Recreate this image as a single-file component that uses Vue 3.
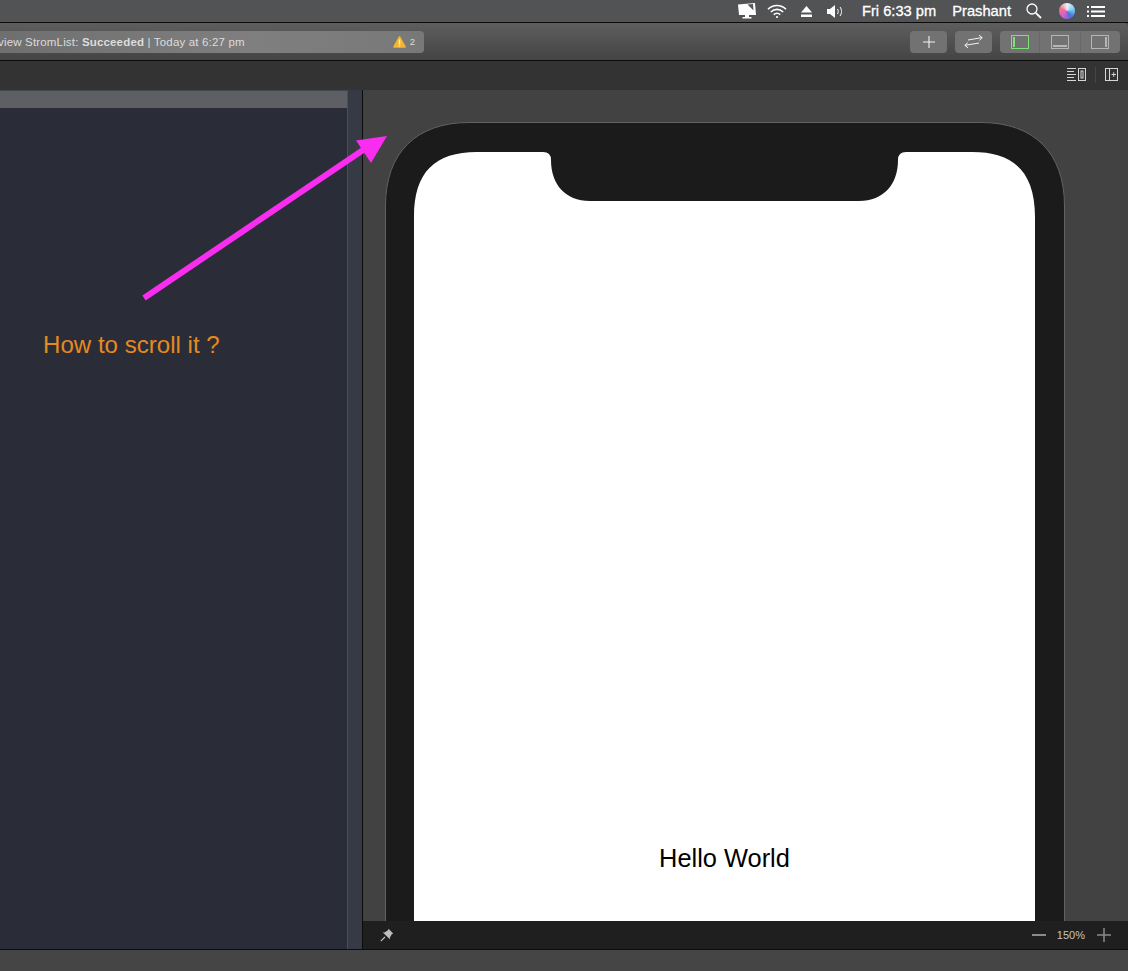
<template>
  <div class="screen-root">
    <div class="menubar">
      <svg class="mi" style="margin-right:11px" width="18" height="16" viewBox="0 0 18 16">
        <path d="M0 1.500L17 0 18 12H11v2h2.500v1.500h-9V14H7v-2H1z" fill="#fff" />
        <path d="M9.500 1.500L15.500 7.500 15 1z" fill="#55575a" />
      </svg>
      <svg class="mi" style="margin-right:14px" width="20" height="15" viewBox="0 0 20 15" fill="none" stroke="#fff" stroke-width="1.600">
        <path d="M1 5.200C6 .2 14 .2 19 5.200" />
        <path d="M3.800 8C7.500 4.500 12.500 4.500 16.200 8" />
        <path d="M6.700 10.700C8.600 9 11.400 9 13.300 10.700" />
        <circle cx="10" cy="13" r="1.100" fill="#fff" stroke="none" />
      </svg>
      <svg class="mi" style="margin-right:15px" width="11" height="11" viewBox="0 0 11 11" fill="#fff">
        <path d="M5.500 0L11 6.500H0z" />
        <rect y="8.500" width="11" height="2.500" />
      </svg>
      <svg class="mi" style="margin-right:19px" width="16" height="13" viewBox="0 0 16 13" fill="none">
        <path d="M0 4h3l5-4v13l-5-4H0z" fill="#fff" />
        <path d="M10.500 4C11.500 5.500 11.500 7.500 10.500 9M13 2C15 4.500 15 8.500 13 11" stroke="#fff" stroke-width="1" />
      </svg>
      <span class="menu-text">Fri 6:33 pm</span>
      <span class="menu-text user">Prashant</span>
      <svg class="mi" style="margin-right:17px" width="16" height="16" viewBox="0 0 16 16" fill="none" stroke="#fff">
        <circle cx="6" cy="6" r="5" stroke-width="1.300" />
        <path d="M9.800 9.800L15 15" stroke-width="1.800" />
      </svg>
      <span class="siri"></span>
      <svg class="mi" width="18" height="11" viewBox="0 0 18 11" fill="#fff">
        <rect width="2" height="2" /><rect x="4" width="14" height="2" />
        <rect y="4.500" width="2" height="2" /><rect x="4" y="4.500" width="14" height="2" />
        <rect y="9" width="2" height="2" /><rect x="4" y="9" width="14" height="2" />
      </svg>
    </div>

    <div class="toolbar">
      <div class="status">
        <span class="status-text">view StromList: <b>Succeeded</b> | Today at 6:27 pm</span>
        <span class="warn">
          <svg width="13" height="12" viewBox="0 0 13 12">
            <path d="M6.500 1L12 11H1z" fill="#f5b62e" stroke="#f5b62e" stroke-width="1.600" stroke-linejoin="round" />
            <rect x="5.800" y="3.500" width="1.400" height="5" fill="#fff3c8" />
            <rect x="5.800" y="9.300" width="1.400" height="1.400" fill="#fff3c8" />
          </svg>
          <span>2</span>
        </span>
      </div>
      <div class="tool-btns">
        <div class="tbtn">
          <svg width="12" height="12" viewBox="0 0 12 12" stroke="#f2f2f2" stroke-width="1.100">
            <path d="M6 0v12M0 6h12" />
          </svg>
        </div>
        <div class="tbtn">
          <svg width="19" height="13" viewBox="0 0 19 13" fill="none" stroke="#f2f2f2" stroke-width="1">
            <path d="M4 5L18 2.600M15 .2L18.200 2.600 15.500 5.400" />
            <path d="M1 10.300L15 8M3.800 7.600L.8 10.300 4 12.800" />
          </svg>
        </div>
        <div class="segmented">
          <div class="seg">
            <svg width="18" height="14" viewBox="0 0 18 14" fill="none">
              <rect x=".5" y=".5" width="17" height="13" stroke="#7fe07a" />
              <rect x="2" y="2" width="2" height="10" fill="#7fe07a" />
            </svg>
          </div>
          <div class="seg">
            <svg width="18" height="14" viewBox="0 0 18 14" fill="none">
              <rect x=".5" y=".5" width="17" height="13" stroke="#b5b5b5" />
              <rect x="2" y="10" width="14" height="2" fill="#b5b5b5" />
            </svg>
          </div>
          <div class="seg">
            <svg width="18" height="14" viewBox="0 0 18 14" fill="none">
              <rect x=".5" y=".5" width="17" height="13" stroke="#b5b5b5" />
              <rect x="14" y="2" width="2" height="10" fill="#b5b5b5" />
            </svg>
          </div>
        </div>
      </div>
    </div>

    <div class="tabbar">
      <svg width="19" height="13" viewBox="0 0 19 13" fill="none" stroke="#d6d6d6">
        <path d="M0 .5h9M0 3.500h7M0 6.500h9M0 9.500h7M0 12.500h9" />
        <rect x="11.500" y=".5" width="7" height="12" />
        <rect x="14" y="3" width="2" height="7" />
      </svg>
      <span class="tab-div"></span>
      <svg width="13" height="13" viewBox="0 0 13 13" fill="none" stroke="#d6d6d6">
        <rect x=".5" y=".5" width="12" height="12" />
        <path d="M4.500 0v13M6.500 6.500h4.500M8.700 4.300v4.500" />
      </svg>
    </div>

    <div class="main">
      <div class="left-pane">
        <div class="left-header"></div>
        <div class="left-body"></div>
      </div>
      <div class="gutter"></div>
      <div class="preview">
        <div class="canvas">
          <div class="phone">
            <!-- device frame and display with the notch -->
            <svg class="phone-shape" width="680" height="1000" viewBox="0 0 680 1000">
              <path d="M.5 1000V84C.5 31 31 .5 84 .5H596C649 .5 679.500 31 679.500 84V1000Z" fill="#1b1b1b" stroke="#626262" />
              <path d="M29 1000V95C29 50 50 30 92 30H158Q166 30 166 38C166 62 180 79 205 79H474C499 79 513 62 513 38Q513 30 521 30H587C629 30 650 50 650 95V1000Z" fill="#fff" />
            </svg>
            <div class="hello">Hello World</div>
          </div>
        </div>
        <div class="canvas-bar">
          <svg width="14" height="14" viewBox="0 0 14 14">
            <path d="M8.500 .8L13.200 5.500 11.800 6.200 9.800 9.800 10 11.500 2.700 4.200 4.400 4.400 8 2.300z" fill="#bdbdbd" />
            <path d="M5 9L.8 13.200" stroke="#bdbdbd" stroke-width="1.200" />
          </svg>
          <div class="zoom-ctrl">
            <span class="zoom-minus"></span>
            <span class="zoom-val">150%</span>
            <svg width="14" height="14" viewBox="0 0 14 14" stroke="#8a8a8a" stroke-width="1.500">
              <path d="M7 0v14M0 7h14" />
            </svg>
          </div>
        </div>
      </div>
    </div>

    <div class="bottombar"></div>

    <svg class="arrow" width="400" height="180" viewBox="0 0 400 180">
      <path d="M144 176L372 22" stroke="#f92df0" stroke-width="6" />
      <path d="M387 14L356 18.500 371 41z" fill="#f92df0" />
    </svg>
    <div class="note">How to scroll it ?</div>
  </div>
</template>

<script setup>
</script>

<style>
html,
body {
  margin: 0;
  background: #454545;
}
</style>

<style scoped>
.screen-root {
  position: relative;
  width: 1128px;
  height: 971px;
  overflow: hidden;
  display: flex;
  flex-direction: column;
  font-family: "Liberation Sans", Arial, sans-serif;
  background: #454545;
}

.menubar {
  height: 22px;
  flex-shrink: 0;
  display: flex;
  align-items: center;
  justify-content: flex-end;
  padding-right: 23px;
  background: #515355;
  border-bottom: 1px solid #0c0c0c;
}

.mi {
  flex-shrink: 0;
}

.menu-text {
  font-size: 14.700px;
  color: #fff;
  margin-right: 16px;
  white-space: nowrap;
  -webkit-text-stroke: 0.3px #fff;
}

.menu-text.user {
  margin-right: 15px;
}

.siri {
  width: 16px;
  height: 16px;
  margin-right: 12px;
  border-radius: 50%;
  background: conic-gradient(#f0f0f8, #7bd0f0, #4a6fe0, #d060d0, #f07090, #f0f0f8);
}

.toolbar {
  height: 37px;
  flex-shrink: 0;
  display: flex;
  align-items: center;
  justify-content: space-between;
  padding: 0 8px 0 0;
  background: linear-gradient(#5e5e5e, #444);
  border-bottom: 1px solid #0c0c0c;
  border-top-right-radius: 4px;
}

.status {
  width: 424px;
  height: 22px;
  box-sizing: border-box;
  display: flex;
  align-items: center;
  justify-content: space-between;
  padding-right: 9px;
  border-radius: 0 4px 4px 0;
  background: linear-gradient(90deg, #6f6f6f, #7f7f7f 60%, #787878);
  color: #dcdcdc;
  font-size: 11.500px;
  overflow: hidden;
}

.status-text {
  margin-left: -2px;
  letter-spacing: 0.17px;
  white-space: nowrap;
}

.warn {
  display: flex;
  align-items: center;
  gap: 4px;
  font-size: 9.500px;
}

.tool-btns {
  display: flex;
  gap: 8px;
}

.tbtn {
  width: 37px;
  height: 22px;
  display: flex;
  align-items: center;
  justify-content: center;
  border-radius: 4px;
  background: #727272;
}

.segmented {
  display: flex;
  width: 120px;
  height: 22px;
  border-radius: 4px;
  background: #727272;
  overflow: hidden;
}

.seg {
  flex: 1;
  display: flex;
  align-items: center;
  justify-content: center;
  border-left: 1px solid #686868;
}

.seg:first-child {
  border-left: none;
}

.tabbar {
  height: 29px;
  flex-shrink: 0;
  box-sizing: border-box;
  display: flex;
  align-items: center;
  justify-content: flex-end;
  padding: 0 10px 2px 0;
  background: #333;
}

.tab-div {
  width: 1px;
  height: 16px;
  margin: 0 9px;
  background: #454545;
}

.main {
  height: 859px;
  flex-shrink: 0;
  display: flex;
  border-bottom: 1px solid #0c0c0c;
}

.left-pane {
  width: 347px;
  display: flex;
  flex-direction: column;
  background: #2a2d38;
}

.left-header {
  height: 17px;
  background: #5d5f65;
  border-top: 1px solid #45474e;
}

.left-body {
  flex: 1;
}

.gutter {
  width: 14px;
  background: #363a45;
  border-left: 1px solid #4a4e59;
  border-right: 1px solid #0c0c0c;
}

.preview {
  flex: 1;
  min-width: 0;
  display: flex;
  flex-direction: column;
}

.canvas {
  flex: 1;
  min-height: 0;
  overflow: hidden;
  padding: 32px 0 0 22px;
  background: #424242;
}

.phone {
  position: relative;
  width: 680px;
  height: 1000px;
  box-sizing: border-box;
  padding: 721px 30px 0 29px;
}

.phone-shape {
  position: absolute;
  top: 0;
  left: 0;
}

.hello {
  position: relative;
  font-size: 25.400px;
  line-height: 30px;
  text-align: center;
  color: #000;
}

.canvas-bar {
  height: 28px;
  flex-shrink: 0;
  display: flex;
  align-items: center;
  justify-content: space-between;
  padding: 0 17px;
  background: #1f1f1f;
}

.zoom-ctrl {
  display: flex;
  align-items: center;
}

.zoom-minus {
  width: 14px;
  height: 1.500px;
  background: #8a8a8a;
}

.zoom-val {
  margin: 0 12px 0 11px;
  font-size: 11px;
  color: #c4c4c4;
}

.bottombar {
  flex: 1;
  background: #454545;
}

.arrow {
  position: absolute;
  left: 0;
  top: 122px;
}

.note {
  position: absolute;
  left: 43px;
  top: 331px;
  font-size: 24.100px;
  line-height: 28px;
  color: #e58a1f;
  white-space: nowrap;
}
</style>
